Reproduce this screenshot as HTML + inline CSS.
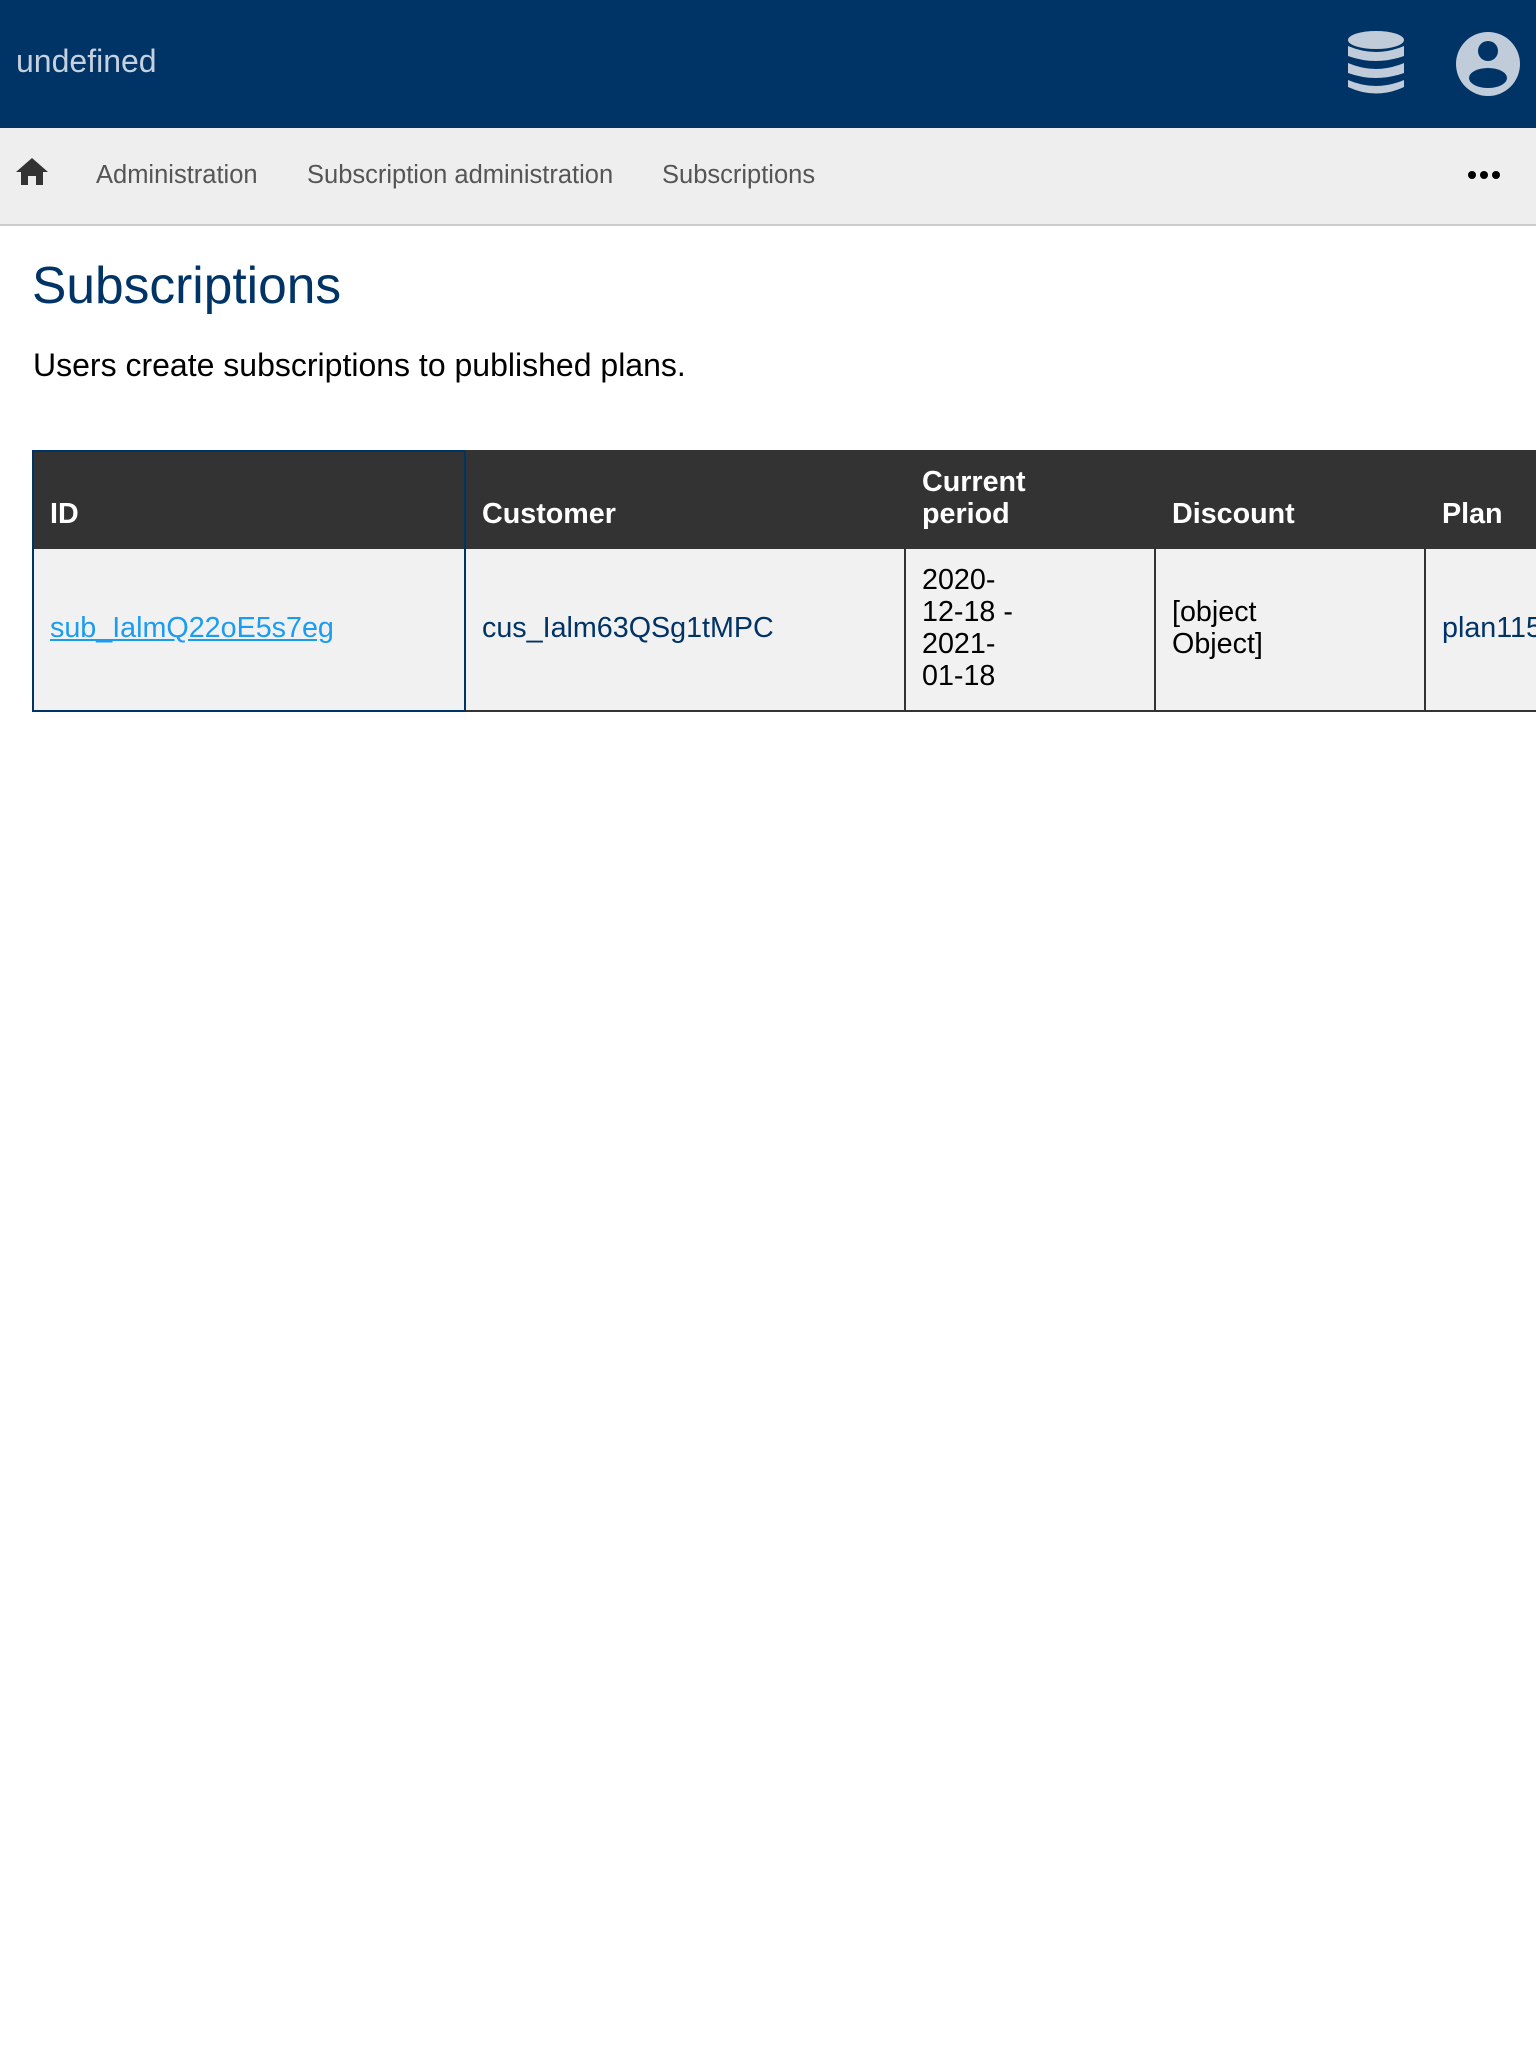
<!DOCTYPE html>
<html><head><meta charset="utf-8"><style>
*{margin:0;padding:0;box-sizing:border-box}
body{width:1536px;height:2048px;background:#fff;font-family:"Liberation Sans",Arial,sans-serif;position:relative;overflow:hidden}
.a{position:absolute;white-space:nowrap}
#hdr{position:absolute;left:0;top:0;width:1536px;height:128px;background:#003366}
#nav{position:absolute;left:0;top:128px;width:1536px;height:98px;background:#eeeeee;border-bottom:2px solid #cccccc}
.n{position:absolute;top:158px;font-size:25.5px;color:#555;line-height:34px}
.cell{position:absolute;background:#f1f1f1}
.th{position:absolute;color:#fff;font-weight:bold;font-size:28.7px;line-height:32px}
.td{position:absolute;font-size:28.7px;line-height:32px}
</style></head><body>
<div id="hdr"></div>
<div class="a" style="left:16px;top:42px;font-size:32px;color:#c5d1de;line-height:38px">undefined</div>
<svg class="a" style="left:1346px;top:30px" width="60" height="68" viewBox="0 0 60 68">
<g fill="#c0ccd9">
<ellipse cx="30" cy="10" rx="28" ry="9"/>
<path d="M2 16 Q30 28 58 16 V26 Q30 36 2 26Z"/>
<path d="M2 33 Q30 45 58 33 V43 Q30 53 2 43Z"/>
<path d="M2 50 Q30 62 58 50 V57 Q30 70 2 57Z"/>
</g></svg>
<svg class="a" style="left:1455px;top:31px" width="66" height="66" viewBox="0 0 66 66">
<circle cx="33" cy="33" r="32" fill="#c0ccd9"/>
<circle cx="33" cy="20" r="10" fill="#003366"/>
<ellipse cx="33" cy="47" rx="19" ry="10" fill="#003366"/>
</svg>
<div id="nav"></div>
<svg class="a" style="left:16px;top:158px" width="32" height="28" viewBox="0 0 32 28"><path d="M16 0 L32 14 H27 V27 H20 V18 H12 V27 H5 V14 H0Z" fill="#333"/></svg>
<div class="n" style="left:96px">Administration</div>
<div class="n" style="left:307px">Subscription administration</div>
<div class="n" style="left:662px">Subscriptions</div>
<svg class="a" style="left:1466px;top:169px" width="36" height="12"><circle cx="6" cy="6" r="4" fill="#000"/><circle cx="18" cy="6" r="4" fill="#000"/><circle cx="30" cy="6" r="4" fill="#000"/></svg>
<div class="a" style="left:32px;top:255px;font-size:51.5px;color:#003366;line-height:60px">Subscriptions</div>
<div class="a" style="left:33px;top:347px;font-size:32px;color:#000;line-height:36px">Users create subscriptions to published plans.</div>

<div class="a" style="left:32px;top:450px;width:1504px;height:100px;background:#333"></div>
<div class="cell" style="left:32px;top:549px;width:1504px;height:162px"></div>
<div class="a" style="left:32px;top:710px;width:1504px;height:2px;background:#333"></div>
<div class="a" style="left:32px;top:450px;width:434px;height:262px;border:2px solid #003366"></div>
<div class="a" style="left:904px;top:549px;width:2px;height:162px;background:#333"></div>
<div class="a" style="left:1154px;top:549px;width:2px;height:162px;background:#333"></div>
<div class="a" style="left:1424px;top:549px;width:2px;height:162px;background:#333"></div>

<div class="th" style="left:50px;top:498px">ID</div>
<div class="th" style="left:482px;top:498px">Customer</div>
<div class="th" style="left:922px;top:466px">Current<br>period</div>
<div class="th" style="left:1172px;top:498px">Discount</div>
<div class="th" style="left:1442px;top:498px">Plan</div>

<div class="td" style="left:50px;top:612px;color:#1a9cf0;text-decoration:underline">sub_IalmQ22oE5s7eg</div>
<div class="td" style="left:482px;top:612px;color:#003366">cus_Ialm63QSg1tMPC</div>
<div class="td" style="left:922px;top:564px;color:#000">2020-<br>12-18 -<br>2021-<br>01-18</div>
<div class="td" style="left:1172px;top:596px;color:#000">[object<br>Object]</div>
<div class="td" style="left:1442px;top:612px;color:#003366">plan115</div>
</body></html>
